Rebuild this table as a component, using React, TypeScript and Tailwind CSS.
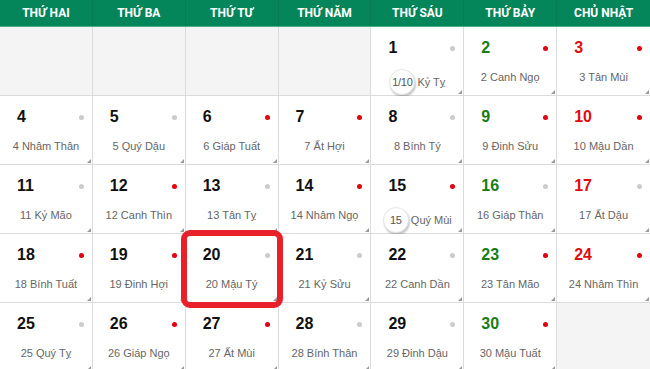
import { memo } from 'react';

const DAYS = ['THỨ HAI', 'THỨ BA', 'THỨ TƯ', 'THỨ NĂM', 'THỨ SÁU', 'THỨ BẢY', 'CHỦ NHẬT'];

type Cell = { d: number; lunar: string; red: boolean; badge?: string } | null;

const LUNAR: [string, boolean][] = [
  ['Kỷ Tỵ', false],
  ['Canh Ngọ', true],
  ['Tân Mùi', true],
  ['Nhâm Thân', false],
  ['Quý Dậu', false],
  ['Giáp Tuất', true],
  ['Ất Hợi', true],
  ['Bính Tý', false],
  ['Đinh Sửu', true],
  ['Mậu Dần', true],
  ['Kỷ Mão', false],
  ['Canh Thìn', true],
  ['Tân Tỵ', false],
  ['Nhâm Ngọ', true],
  ['Quý Mùi', true],
  ['Giáp Thân', false],
  ['Ất Dậu', false],
  ['Bính Tuất', true],
  ['Đinh Hợi', true],
  ['Mậu Tý', false],
  ['Kỷ Sửu', false],
  ['Canh Dần', false],
  ['Tân Mão', true],
  ['Nhâm Thìn', true],
  ['Quý Tỵ', false],
  ['Giáp Ngọ', true],
  ['Ất Mùi', true],
  ['Bính Thân', false],
  ['Đinh Dậu', false],
  ['Mậu Tuất', true],
];

const CELLS: Cell[] = [
  null,
  null,
  null,
  null,
  ...LUNAR.map(([lunar, red], i) => ({
    d: i + 1,
    lunar,
    red,
    badge: i === 0 ? '1/10' : i === 14 ? '15' : undefined,
  })),
  null,
];

function DayCell({ cell, col }: { cell: Cell; col: number }) {
  const edge = col < 6 ? 'border-r' : '';
  if (!cell) {
    return <div className={`h-[69px] border-b border-[#dcdcdc] bg-[#f4f4f4] ${edge}`} />;
  }
  const numColor =
    col === 6 ? 'text-[#e00d0d]' : col === 5 ? 'text-[#177d17]' : 'text-[#111]';
  return (
    <div className={`relative h-[69px] border-b border-[#dcdcdc] bg-white ${edge}`}>
      <div className="flex items-center justify-between pl-[17px] pr-[8px] pt-[11px]">
        <span className={`text-[16px] font-bold leading-[20px] ${numColor}`}>{cell.d}</span>
        <span
          className={`h-[5px] w-[5px] rounded-full ${cell.red ? 'bg-[#e3000f]' : 'bg-[#cccccc]'}`}
        />
      </div>
      <div className="mt-[11px] flex items-center justify-center text-[11px] leading-[16px] text-[#666]">
        {cell.badge ? (
          <>
            <span className="flex h-[26px] min-w-[26px] items-center justify-center rounded-full border border-[#e6e6e6] bg-white text-[11px] tracking-[-0.3px] text-[#555] shadow-[1px_2px_2px_rgba(0,0,0,0.22)]">
              {cell.badge}
            </span>
            <span className="ml-[2px]">{cell.lunar}</span>
          </>
        ) : (
          <span>
            {cell.d} {cell.lunar}
          </span>
        )}
      </div>
      <span className="absolute bottom-[1px] right-[1px] h-0 w-0 border-b-[4px] border-l-[4px] border-b-[#9a9a9a] border-l-transparent" />
      {cell.d === 20 && (
        <span className="pointer-events-none absolute -bottom-[6px] -left-[5px] -right-[5px] -top-[4px] z-10 rounded-[9px] border-[6px] border-[#e8202a]" />
      )}
    </div>
  );
}

function App() {
  return (
    <div
      className="h-[369px] w-[650px] overflow-hidden bg-white"
      style={{ fontFamily: '"Liberation Sans", Arial, sans-serif' }}
    >
      <div className="grid grid-cols-7 border-b border-[#4fae86] bg-[#05855a]">
        {DAYS.map((d, i) => (
          <div
            key={d}
            className={`flex h-[26px] items-center justify-center text-[12px] font-bold text-white ${
              i < 6 ? 'border-r border-[#0a7a50]' : ''
            }`}
            style={{ fontFamily: 'Roboto, "Liberation Sans", sans-serif' }}
          >
            {d}
          </div>
        ))}
      </div>
      <div className="grid grid-cols-7">
        {CELLS.map((c, i) => (
          <DayCell key={i} cell={c} col={i % 7} />
        ))}
      </div>
    </div>
  );
}

export default memo(App);
